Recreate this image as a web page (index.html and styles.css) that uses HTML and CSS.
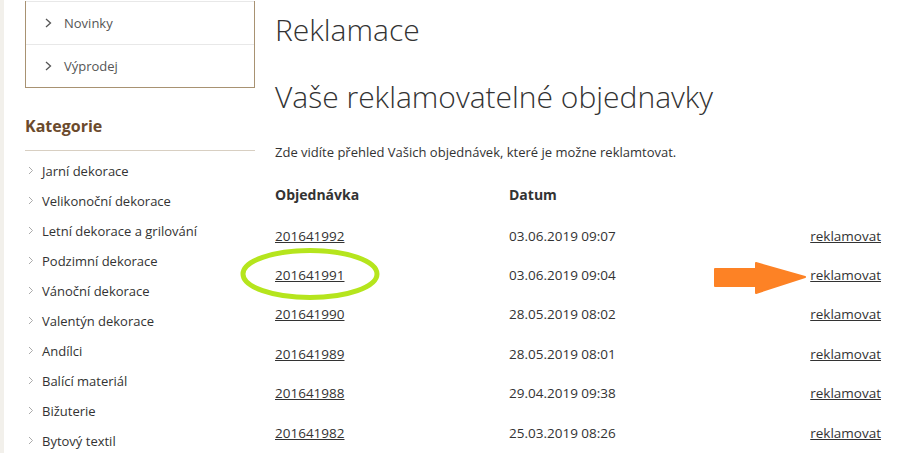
FILE: index.html
```html
<!DOCTYPE html>
<html lang="cs">
<head>
  <meta charset="UTF-8">
  <title>Reklamace</title>
  <link rel="stylesheet" href="styles.css">
</head>
<body>
  <div class="page">
    <div class="edge"></div>

    <aside class="sidebar">
      <ul class="nav-box">
        <li><svg class="chev" width="7" height="10" viewBox="0 0 7 10"><path d="M1 1 L5.5 5 L1 9" fill="none" stroke="#555" stroke-width="1.3"/></svg>Novinky</li>
        <li><svg class="chev" width="7" height="10" viewBox="0 0 7 10"><path d="M1 1 L5.5 5 L1 9" fill="none" stroke="#555" stroke-width="1.3"/></svg>Výprodej</li>
      </ul>

      <h3 class="side-title">Kategorie</h3>
      <ul class="cats">
        <li><svg class="chev-small" width="6" height="9" viewBox="0 0 6 9"><path d="M1 1 L4.5 4.5 L1 8" fill="none" stroke="#aaa" stroke-width="1"/></svg>Jarní dekorace</li>
        <li><svg class="chev-small" width="6" height="9" viewBox="0 0 6 9"><path d="M1 1 L4.5 4.5 L1 8" fill="none" stroke="#aaa" stroke-width="1"/></svg>Velikonoční dekorace</li>
        <li><svg class="chev-small" width="6" height="9" viewBox="0 0 6 9"><path d="M1 1 L4.5 4.5 L1 8" fill="none" stroke="#aaa" stroke-width="1"/></svg>Letní dekorace a grilování</li>
        <li><svg class="chev-small" width="6" height="9" viewBox="0 0 6 9"><path d="M1 1 L4.5 4.5 L1 8" fill="none" stroke="#aaa" stroke-width="1"/></svg>Podzimní dekorace</li>
        <li><svg class="chev-small" width="6" height="9" viewBox="0 0 6 9"><path d="M1 1 L4.5 4.5 L1 8" fill="none" stroke="#aaa" stroke-width="1"/></svg>Vánoční dekorace</li>
        <li><svg class="chev-small" width="6" height="9" viewBox="0 0 6 9"><path d="M1 1 L4.5 4.5 L1 8" fill="none" stroke="#aaa" stroke-width="1"/></svg>Valentýn dekorace</li>
        <li><svg class="chev-small" width="6" height="9" viewBox="0 0 6 9"><path d="M1 1 L4.5 4.5 L1 8" fill="none" stroke="#aaa" stroke-width="1"/></svg>Andílci</li>
        <li><svg class="chev-small" width="6" height="9" viewBox="0 0 6 9"><path d="M1 1 L4.5 4.5 L1 8" fill="none" stroke="#aaa" stroke-width="1"/></svg>Balící materiál</li>
        <li><svg class="chev-small" width="6" height="9" viewBox="0 0 6 9"><path d="M1 1 L4.5 4.5 L1 8" fill="none" stroke="#aaa" stroke-width="1"/></svg>Bižuterie</li>
        <li><svg class="chev-small" width="6" height="9" viewBox="0 0 6 9"><path d="M1 1 L4.5 4.5 L1 8" fill="none" stroke="#aaa" stroke-width="1"/></svg>Bytový textil</li>
      </ul>
    </aside>

    <main class="content">
      <h1>Reklamace</h1>
      <h2>Vaše reklamovatelné objednavky</h2>
      <p class="intro">Zde vidíte přehled Vašich objednávek, které je možne reklamtovat.</p>

      <table class="orders">
        <thead>
          <tr><th>Objednávka</th><th>Datum</th><th></th></tr>
        </thead>
        <tbody>
          <tr><td><a href="#">201641992</a></td><td>03.06.2019 09:07</td><td class="act"><a href="#">reklamovat</a></td></tr>
          <tr><td><a href="#">201641991</a></td><td>03.06.2019 09:04</td><td class="act"><a href="#">reklamovat</a></td></tr>
          <tr><td><a href="#">201641990</a></td><td>28.05.2019 08:02</td><td class="act"><a href="#">reklamovat</a></td></tr>
          <tr><td><a href="#">201641989</a></td><td>28.05.2019 08:01</td><td class="act"><a href="#">reklamovat</a></td></tr>
          <tr><td><a href="#">201641988</a></td><td>29.04.2019 09:38</td><td class="act"><a href="#">reklamovat</a></td></tr>
          <tr><td><a href="#">201641982</a></td><td>25.03.2019 08:26</td><td class="act"><a href="#">reklamovat</a></td></tr>
        </tbody>
      </table>
    </main>
  </div>

  <!-- annotations drawn over the screenshot -->
  <svg class="mark-circle" width="150" height="62" viewBox="0 0 150 62">
    <ellipse cx="72" cy="29" rx="67" ry="23.5" fill="none" stroke="#b5e51d" stroke-width="5"/>
  </svg>
  <svg class="mark-arrow" width="94" height="34" viewBox="0 0 94 34">
    <path d="M2 8 H43 V2 L92 16 L43 32 V25 H2 Z" fill="#fd8225" stroke="#fd8225" stroke-width="2" stroke-linejoin="round"/>
  </svg>
</body>
</html>
```

FILE: styles.css
```css
body {
  margin: 0;
  font-family: "Open Sans", "Liberation Sans", sans-serif;
  color: #333;
  background: #fff;
}

.page {
  display: flex;
  align-items: flex-start;
}

.edge {
  width: 4px;
  align-self: stretch;
  min-height: 453px;
  background: #f2f0eb;
}

.sidebar {
  width: 230px;
  margin-left: 21px;
}

.nav-box {
  list-style: none;
  margin: 1px 0 0;
  padding: 0;
  border: 1px solid #a89272;
  border-top: none;
}

.nav-box li {
  display: flex;
  align-items: center;
  height: 42px;
  border-top: 1px solid #e8e8e8;
  padding-left: 19px;
  font-size: 13px;
  color: #555;
}

.chev {
  margin-right: 12px;
}

.side-title {
  margin: 27px 0 0;
  padding-bottom: 13px;
  border-bottom: 1px solid #d8cfc2;
  font-size: 16px;
  font-weight: 700;
  color: #6b4a2c;
}

.cats {
  list-style: none;
  margin: 5px 0 0;
  padding: 0;
}

.cats li {
  display: flex;
  align-items: center;
  height: 30px;
  font-size: 13px;
  color: #333;
}

.chev-small {
  margin: 0 8px 2px 3px;
}

.content {
  width: 606px;
  margin-left: 20px;
}

h1 {
  margin: 10px 0 0;
  font-size: 30px;
  font-weight: 300;
  line-height: 40px;
  color: #333;
}

h2 {
  margin: 25px 0 0;
  font-size: 30px;
  font-weight: 300;
  line-height: 44px;
  color: #333;
}

.intro {
  margin: 23px 0 0;
  font-size: 13px;
  line-height: 20px;
}

.orders {
  width: 100%;
  margin-top: 23px;
  border-collapse: collapse;
  font-size: 13.5px;
}

.orders th {
  text-align: left;
  font-weight: 700;
  font-size: 14px;
  padding: 0 0 11px;
  line-height: 20px;
}

.orders th:first-child,
.orders td:first-child {
  width: 234px;
}

.orders td {
  padding: 0;
  height: 39.4px;
  line-height: 20px;
}

.orders a {
  color: #333;
}

.orders .act {
  text-align: right;
}

.mark-circle {
  position: absolute;
  left: 238px;
  top: 245px;
}

.mark-arrow {
  position: absolute;
  left: 713px;
  top: 261px;
}
```
